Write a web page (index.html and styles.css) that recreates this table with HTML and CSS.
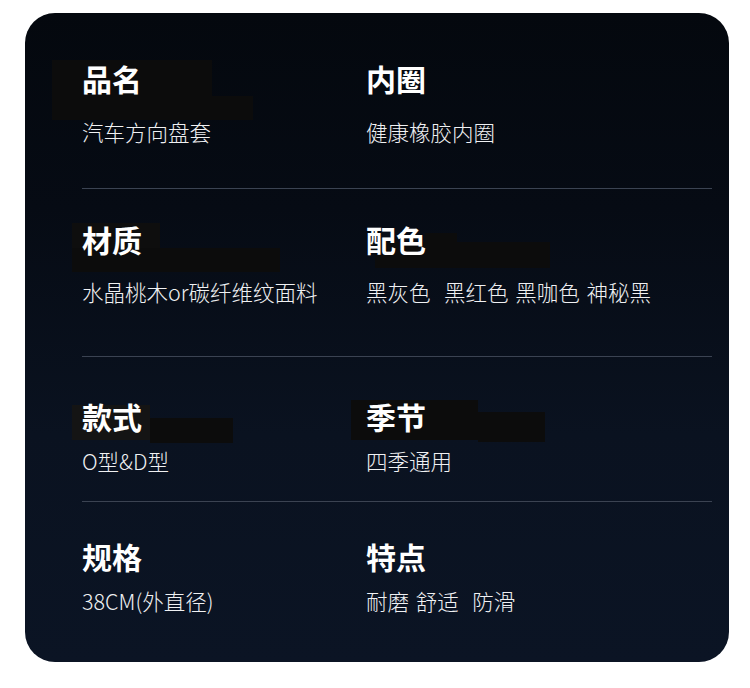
FILE: index.html
```html
<!DOCTYPE html>
<html lang="zh-CN">
<head>
<meta charset="utf-8">
<title>产品参数</title>
<link rel="stylesheet" href="styles.css">
</head>
<body>
<div class="card">
  <div class="row row-1">
    <div class="cell">
      <div class="label"><span class="mask mask-1a"></span><span class="mask mask-1b"></span><span class="text">品名</span></div>
      <div class="value">汽车方向盘套</div>
    </div>
    <div class="cell">
      <div class="label"><span class="text">内圈</span></div>
      <div class="value">健康橡胶内圈</div>
    </div>
  </div>
  <div class="row row-2">
    <div class="cell">
      <div class="label"><span class="mask mask-2a"></span><span class="mask mask-2b"></span><span class="text">材质</span></div>
      <div class="value">水晶桃木or碳纤维纹面料</div>
    </div>
    <div class="cell">
      <div class="label"><span class="mask mask-2c"></span><span class="mask mask-2d"></span><span class="text">配色</span></div>
      <div class="value">黑灰色&nbsp;&nbsp;黑红色 黑咖色 神秘黑</div>
    </div>
  </div>
  <div class="row row-3">
    <div class="cell">
      <div class="label"><span class="mask mask-3a"></span><span class="mask mask-3b"></span><span class="text">款式</span></div>
      <div class="value">O型&amp;D型</div>
    </div>
    <div class="cell">
      <div class="label"><span class="mask mask-3c"></span><span class="mask mask-3d"></span><span class="text">季节</span></div>
      <div class="value">四季通用</div>
    </div>
  </div>
  <div class="row row-4">
    <div class="cell">
      <div class="label"><span class="text">规格</span></div>
      <div class="value">38CM(外直径)</div>
    </div>
    <div class="cell">
      <div class="label"><span class="text">特点</span></div>
      <div class="value">耐磨 舒适&nbsp;&nbsp;防滑</div>
    </div>
  </div>
</div>
</body>
</html>
```

FILE: styles.css
```css
* { box-sizing: border-box; }

body {
  margin: 0;
  background: #ffffff;
  font-family: "Noto Sans CJK SC", "Noto Sans", sans-serif;
}

.card {
  margin: 13px 0 0 25px;
  width: 704px;
  height: 649px;
  border-radius: 30px;
  background: linear-gradient(180deg, #04080e 0%, #060b14 30%, #0a1220 65%, #0b1424 100%);
  padding: 0 17px 0 57px;
  overflow: hidden;
}

.row {
  display: grid;
  grid-template-columns: 284px 1fr;
  border-bottom: 1px solid #3b4352;
}

.row-4 { border-bottom: none; }

.cell {
  display: flex;
  flex-direction: column;
  gap: var(--gap);
}

.row-1 { padding: 51px 0 46px; --gap: 28px; }
.row-2 { padding: 36px 0 54px; --gap: 27px; }
.row-3 { padding: 45px 0 30px; --gap: 19px; }
.row-4 { padding: 40px 0 51px; --gap: 19px; }

.label {
  position: relative;
  height: 29px;
  font-size: 30px;
  line-height: 29px;
  font-weight: 700;
  color: #ffffff;
}

.label .text {
  position: relative;
}

.value {
  height: 21px;
  font-size: 21.5px;
  line-height: 21px;
  font-weight: 300;
  word-spacing: 2px;
  color: #f0f1f3;
  white-space: nowrap;
}

.mask {
  position: absolute;
  background: #0c0c0c;
}

.mask-1a { left: -30px; top: -4px; width: 160px; height: 37px; }
.mask-1b { left: -30px; top: 32px; width: 201px; height: 24px; }

.mask-2a { left: -10px; top: -2px; width: 88px; height: 27px; background: #0e0e0e; }
.mask-2b { left: -10px; top: 23px; width: 208px; height: 24px; }
.mask-2c { left: 59px; top: 8px; width: 32px; height: 10px; }
.mask-2d { left: 9px; top: 17px; width: 175px; height: 26px; }

.mask-3a { left: -10px; top: 3px; width: 78px; height: 35px; background: #141414; }
.mask-3b { left: 68px; top: 16px; width: 83px; height: 25px; }
.mask-3c { left: -15px; top: -2px; width: 127px; height: 40px; }
.mask-3d { left: 112px; top: 10px; width: 67px; height: 30px; }
```
